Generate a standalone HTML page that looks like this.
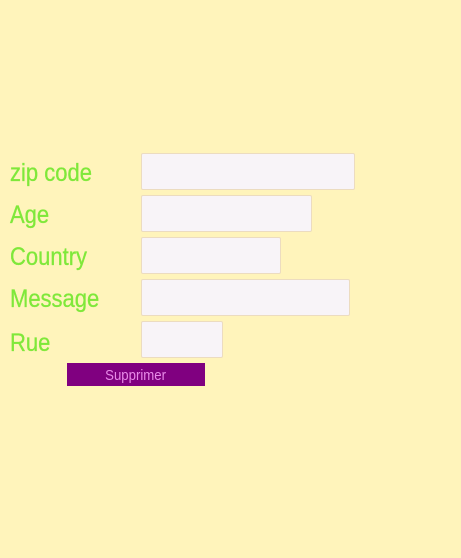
<!DOCTYPE html>
<html><head><style>
html,body{margin:0;width:461px;height:558px;background:#fff4bb;overflow:hidden;font-family:"Liberation Sans",sans-serif}
.l{position:absolute;left:10px;color:#7fe83a;font-size:25px;transform:scaleX(0.88);transform-origin:left top;white-space:nowrap;-webkit-text-stroke:0.3px #7fe83a}
.i{position:absolute;left:141px;background:#f8f4f8;border:1px solid #ecdcc0;border-radius:2px;box-sizing:border-box;height:37px}
.b{position:absolute;left:67px;top:363px;width:138px;height:23px;background:#800080;color:#e88ae8;font-size:15px;text-align:center;line-height:25px}
.b span{display:inline-block;transform:scaleX(0.88)}
</style></head><body>
<div class="l" style="top:159px">zip code</div>
<div class="i" style="top:153px;width:214px"></div>
<div class="l" style="top:201px">Age</div>
<div class="i" style="top:195px;width:171px"></div>
<div class="l" style="top:243px">Country</div>
<div class="i" style="top:237px;width:140px"></div>
<div class="l" style="top:285px">Message</div>
<div class="i" style="top:279px;width:209px"></div>
<div class="l" style="top:329px">Rue</div>
<div class="i" style="top:321px;width:82px"></div>
<div class="b"><span>Supprimer</span></div>
</body></html>
